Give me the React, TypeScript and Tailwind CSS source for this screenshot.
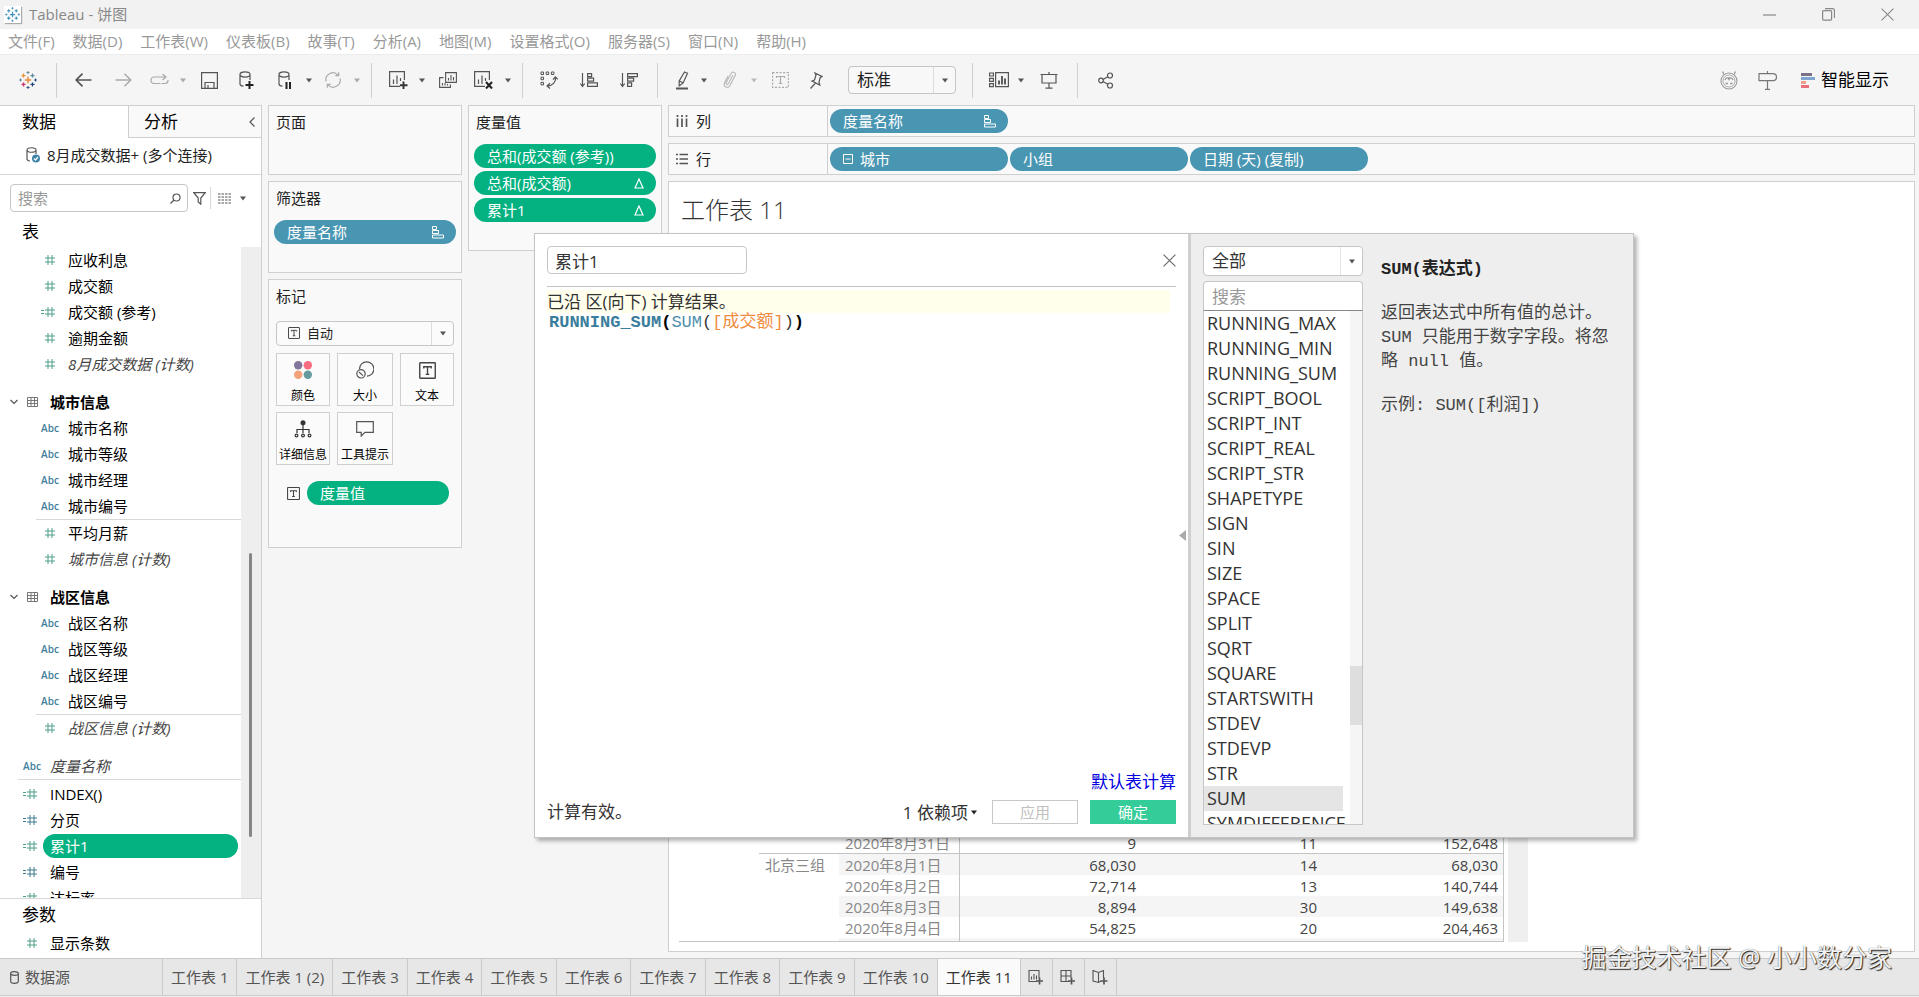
import type { ReactNode } from "react";
import clsx from "clsx";

type FieldKind = "number" | "calc" | "calcBlue" | "text";

interface Field {
  name: string;
  kind: FieldKind;
  italic?: boolean;
}

const menus = [
  "文件(F)",
  "数据(D)",
  "工作表(W)",
  "仪表板(B)",
  "故事(T)",
  "分析(A)",
  "地图(M)",
  "设置格式(O)",
  "服务器(S)",
  "窗口(N)",
  "帮助(H)",
];

const factFields: Field[] = [
  { name: "应收利息", kind: "number" },
  { name: "成交额", kind: "number" },
  { name: "成交额 (参考)", kind: "calc" },
  { name: "逾期金额", kind: "number" },
  { name: "8月成交数据 (计数)", kind: "number", italic: true },
];

const cityDimensions: Field[] = [
  { name: "城市名称", kind: "text" },
  { name: "城市等级", kind: "text" },
  { name: "城市经理", kind: "text" },
  { name: "城市编号", kind: "text" },
];

const cityMeasures: Field[] = [
  { name: "平均月薪", kind: "number" },
  { name: "城市信息 (计数)", kind: "number", italic: true },
];

const zoneDimensions: Field[] = [
  { name: "战区名称", kind: "text" },
  { name: "战区等级", kind: "text" },
  { name: "战区经理", kind: "text" },
  { name: "战区编号", kind: "text" },
];

const zoneMeasures: Field[] = [
  { name: "战区信息 (计数)", kind: "number", italic: true },
];

const looseFields: Field[] = [
  { name: "INDEX()", kind: "calc" },
  { name: "分页", kind: "calcBlue" },
  { name: "累计1", kind: "calc" },
  { name: "编号", kind: "calcBlue" },
  { name: "达标率", kind: "calc" },
];

const functionNames = [
  "RUNNING_MAX",
  "RUNNING_MIN",
  "RUNNING_SUM",
  "SCRIPT_BOOL",
  "SCRIPT_INT",
  "SCRIPT_REAL",
  "SCRIPT_STR",
  "SHAPETYPE",
  "SIGN",
  "SIN",
  "SIZE",
  "SPACE",
  "SPLIT",
  "SQRT",
  "SQUARE",
  "STARTSWITH",
  "STDEV",
  "STDEVP",
  "STR",
  "SUM",
  "SYMDIFFERENCE",
];

const rows = [
  { group: "", date: "2020年8月31日", values: ["9", "11", "152,648"] },
  { group: "北京三组", date: "2020年8月1日", values: ["68,030", "14", "68,030"] },
  { group: "", date: "2020年8月2日", values: ["72,714", "13", "140,744"] },
  { group: "", date: "2020年8月3日", values: ["8,894", "30", "149,638"] },
  { group: "", date: "2020年8月4日", values: ["54,825", "20", "204,463"] },
];

const sheets = [
  "工作表 1",
  "工作表 1 (2)",
  "工作表 3",
  "工作表 4",
  "工作表 5",
  "工作表 6",
  "工作表 7",
  "工作表 8",
  "工作表 9",
  "工作表 10",
  "工作表 11",
];

function Svg({
  w = 18,
  h = 18,
  className = "text-[#555]",
  children,
}: {
  w?: number;
  h?: number;
  className?: string;
  children: ReactNode;
}) {
  return (
    <svg
      width={w}
      height={h}
      viewBox={`0 0 ${w} ${h}`}
      fill="none"
      stroke="currentColor"
      strokeWidth="1.2"
      className={clsx("shrink-0", className)}
      aria-hidden="true"
    >
      {children}
    </svg>
  );
}

function Caret({ className = "text-[#555]" }: { className?: string }) {
  return (
    <Svg w={8} h={5} className={className}>
      <path d="M1 0.5h6L4 4.5z" fill="currentColor" stroke="none" />
    </Svg>
  );
}

const logoColors = {
  color: ["#eb8a3c", "#5b879b", "#c9356a", "#1f457e", "#eb9129"],
  blue: ["#3f8fb8", "#3f8fb8", "#3f8fb8", "#3f8fb8", "#3f8fb8"],
};

function Logo({ size, tone }: { size: number; tone: "color" | "blue" }) {
  const c = logoColors[tone];
  return (
    <svg width={size} height={size} viewBox="0 0 18 18" fill="none" aria-hidden="true">
      <path d="M9 5.8v6.4M5.8 9h6.4" stroke={c[0]} strokeWidth="1.5" />
      <path d="M4.5 2.6v4M2.5 4.6h4" stroke={c[4]} strokeWidth="1.2" />
      <path d="M13.5 2.6v4M11.5 4.6h4" stroke={c[1]} strokeWidth="1.2" />
      <path d="M4.5 11.4v4M2.5 13.4h4" stroke={c[2]} strokeWidth="1.4" />
      <path d="M13.5 11.4v4M11.5 13.4h4" stroke={c[3]} strokeWidth="1.2" />
      <path d="M9 0v3M7.5 1.5h3M1.5 7.5v3M0 9h3" stroke={c[1]} strokeWidth="0.9" />
      <path d="M16.5 7.5v3M15 9h3M9 15v3M7.5 16.5h3" stroke={c[3]} strokeWidth="0.9" />
    </svg>
  );
}

function TextIcon({ size = 16 }: { size?: number }) {
  return (
    <svg width={size} height={size} viewBox="0 0 16 16" fill="none" stroke="#444" strokeWidth="1.3" className="shrink-0" aria-hidden="true">
      <rect x="0.7" y="0.7" width="14.6" height="14.6" rx="0.5" />
      <path d="M4.5 6V4.5h7V6M8 4.5v7.2M6.3 11.7h3.4" />
    </svg>
  );
}

function SortBars() {
  return (
    <Svg w={12} h={13} className="text-white">
      <path d="M0.5 0.5h4v3h-4zM0.5 4.5h6v3h-6zM0.5 9h11v3h-11z" strokeWidth="1" />
    </Svg>
  );
}

function Delta() {
  return (
    <Svg w={10} h={11} className="text-white">
      <path d="M5 1L9 10H1z" />
    </Svg>
  );
}

function CloseIcon({ size = 13, className }: { size?: number; className?: string }) {
  return (
    <svg width={size} height={size} viewBox="0 0 12 12" stroke="currentColor" className={className} aria-hidden="true">
      <path d="M0.5 0.5l11 11M11.5 0.5l-11 11" />
    </svg>
  );
}

function Tool({
  label,
  width = "w-10",
  children,
}: {
  label: string;
  width?: string;
  children: ReactNode;
}) {
  return (
    <button type="button" aria-label={label} className={clsx("flex h-8 shrink-0 items-center justify-center", width)}>
      {children}
    </button>
  );
}

function Divider({ className }: { className?: string }) {
  return <span className={clsx("h-[35px] w-px shrink-0 bg-[#d0d0d0]", className)} />;
}

function Toolbar() {
  return (
    <div className="flex h-[50px] shrink-0 items-center bg-[#f5f5f5]">
      <Tool label="开始页面" width="w-14">
        <Logo size={18} tone="color" />
      </Tool>
      <Divider className="mr-1.5" />
      <Tool label="撤销">
        <Svg w={17} h={14}>
          <path d="M16.5 7H1M7.5 0.7L1.2 7l6.3 6.3" strokeWidth="1.7" />
        </Svg>
      </Tool>
      <Tool label="重做">
        <Svg w={17} h={14} className="text-[#aaa]">
          <path d="M0.5 7H16M9.5 0.7L15.8 7l-6.3 6.3" strokeWidth="1.5" />
        </Svg>
      </Tool>
      <Tool label="重复" width="w-8">
        <Svg w={19} h={12} className="text-[#aaa]">
          <path d="M10.500 9.500H4a3 3 0 0 1-3-3v-.5a3 3 0 0 1 3-3h12M12.500 0l3.500 3-3.500 3M11.500 9.500H15a3 3 0 0 0 3-3V6" />
        </Svg>
      </Tool>
      <Tool label="重复选项" width="w-4">
        <Caret className="text-[#aaa]" />
      </Tool>
      <Tool label="保存" width="w-9">
        <Svg w={17} h={17}>
          <path d="M0.6 0.6h15.8v15.8H0.6zM4 16v-5.5h9V16M7 16v-3" />
        </Svg>
      </Tool>
      <Tool label="新建数据源">
        <Svg w={16} h={19}>
          <path d="M1 3.5c0-3.4 10-3.4 10 0s-10 3.4-10 0zM1 3.5V13c0 1.3 1.5 2 3.5 2.2M11 3.5V9" />
          <path d="M10.5 10v8M6.5 14h8" stroke="#222" strokeWidth="2" />
        </Svg>
      </Tool>
      <Tool label="暂停自动更新" width="w-9">
        <Svg w={14} h={19}>
          <path d="M1 3.5c0-3.4 10-3.4 10 0s-10 3.4-10 0zM1 3.5V13c0 1.3 1.5 2 3.5 2.2M11 3.5V9" />
          <path d="M8.5 11v7M12 11v7" stroke="#222" strokeWidth="2" />
        </Svg>
      </Tool>
      <Tool label="更新选项" width="w-3">
        <Caret />
      </Tool>
      <Tool label="运行更新" width="w-9">
        <Svg w={18} h={16} className="text-[#aaa]">
          <path d="M2 9.5A7 7 0 0 1 14 3.2M16 6.5A7 7 0 0 1 4 12.8M14.7 0.3v3.4h-3.4M3.3 15.7v-3.4h3.4" />
        </Svg>
      </Tool>
      <Tool label="运行选项" width="w-3">
        <Caret className="text-[#aaa]" />
      </Tool>
      <Divider className="mr-2.5 ml-2" />
      <Tool label="新建工作表" width="w-8">
        <Svg w={19} h={18}>
          <path d="M11 15.4H0.6V0.6h14.8V9M4.5 13V8.5M8 13V4.5M11.5 10V7" />
          <path d="M14.5 10.5v7.5M11 14.2h7.5" stroke="#333" strokeWidth="1.9" />
        </Svg>
      </Tool>
      <Tool label="新建选项" width="w-4">
        <Caret />
      </Tool>
      <Tool label="复制工作表" width="w-9">
        <Svg w={18} h={16}>
          <path d="M6.6 0.6h10.8v9.8H6.6zM9.5 8.5V6M12 8.5V3M14.5 8.5V5M4.5 5.6H0.6v9.8h10.8v-3M3.5 13.5V11M6 13.5V11M8.5 13.5V12" strokeWidth="1.1" />
        </Svg>
      </Tool>
      <Tool label="清除工作表" width="w-9">
        <Svg w={20} h={18}>
          <path d="M11 15.4H0.6V0.6h14.8V9M4.5 13V8.5M8 13V4.5M11.5 10V7" />
          <path d="M12 11l6 6.5M18 11l-6 6.5" stroke="#222" strokeWidth="2.1" />
        </Svg>
      </Tool>
      <Tool label="清除选项" width="w-3">
        <Caret />
      </Tool>
      <Divider className="mr-1.5 ml-2" />
      <Tool label="交换行和列">
        <Svg w={18} h={18}>
          <path d="M1 1h2.5v2.5H1zM6.2 1h2.5v2.5H6.2zM11.4 1h2.5v2.5h-2.5zM1 6.2h2.5v2.5H1zM1 11.4h2.5v2.5H1z" strokeWidth="1" />
          <path d="M15.5 6.5c.5 4-2.5 8-8 8.5M13 8.7l2.3-2.8 2.4 2.5M10 12.2L7 15l3 2.5" />
        </Svg>
      </Tool>
      <Tool label="升序排序">
        <Svg w={18} h={16}>
          <path d="M2.5 1v13M0.3 11.5l2.2 3 2.2-3M7.6 1.6h4v3h-4zM7.6 6.2h6v3h-6zM7.6 10.8h9.8v3.6H7.6z" />
        </Svg>
      </Tool>
      <Tool label="降序排序">
        <Svg w={18} h={16}>
          <path d="M2.5 1v13M0.3 11.5l2.2 3 2.2-3M7.6 1.6h9.8v3H7.6zM7.6 6.2h6v3h-6zM7.6 10.8h4v3.6h-4z" />
        </Svg>
      </Tool>
      <Divider className="mr-2.5 ml-2" />
      <Tool label="突出显示" width="w-7">
        <Svg w={15} h={19}>
          <path d="M9.5 1l3 1.2-4.5 10-3.8 2.6V10zM4.3 10l3.6 1.8" />
          <path d="M1 17.5h12" strokeWidth="2" />
        </Svg>
      </Tool>
      <Tool label="突出显示选项" width="w-4">
        <Caret />
      </Tool>
      <Tool label="组成员" width="w-9">
        <Svg w={14} h={18} className="text-[#bbb]">
          <path d="M10 4L5.5 12.5c-.8 1.5-3 .6-2.3-1L8 2.5C9.5 0 13.5 1.5 12.2 4.5L7 14.5c-2 3.5-7 1.5-5.5-2.5L5 5" />
        </Svg>
      </Tool>
      <Tool label="组成员选项" width="w-3">
        <Caret className="text-[#bbb]" />
      </Tool>
      <Tool label="显示标记标签">
        <Svg w={17} h={16} className="text-[#aaa]">
          <path d="M0.6 0.6h15.8v14.8H0.6z" strokeDasharray="2 1.5" />
          <path d="M4.5 6V4.5h8V6M8.5 4.5v7M6.8 11.5h3.4" />
        </Svg>
      </Tool>
      <Tool label="固定轴" width="w-8">
        <Svg w={14} h={17}>
          <path d="M6 1l7 3.5-1.8 1L10 10l.8 3L3 9l2.5-1L7 3zM6.500 11L1.500 16.500" />
        </Svg>
      </Tool>
      <div className="relative ml-4 flex shrink-0">
        <select
          aria-label="适合"
          className="h-[28px] w-[108px] appearance-none rounded-sm border border-[#c6c6c6] bg-[#f8f8f8] pl-2 text-[17px] leading-6 text-[#222]"
        >
          <option>标准</option>
        </select>
        <span className="pointer-events-none absolute inset-y-px right-px flex w-[22px] items-center justify-center border-l border-[#dcdcdc]">
          <Caret />
        </span>
      </div>
      <Divider className="mr-3 ml-4" />
      <Tool label="显示/隐藏卡" width="w-7">
        <Svg w={20} h={16}>
          <path d="M0.6 1h3.8v3H0.6zM0.6 6.3h3.8v3H0.6zM0.6 11.6h3.8v3H0.6zM6.6 0.6h12.800v14H6.600z" />
          <path d="M10 12.5V8.5M13 12.5V4M16 12.5V6.5" strokeWidth="1.9" />
        </Svg>
      </Tool>
      <Tool label="卡选项" width="w-4">
        <Caret />
      </Tool>
      <Tool label="演示模式">
        <Svg w={18} h={17}>
          <path d="M0.5 2.5h17M2 2.5v8.5h14V2.5M9 0v2.5M9 11v5M5.5 16.2h7" />
        </Svg>
      </Tool>
      <Divider className="mr-2 ml-2" />
      <Tool label="共享">
        <Svg w={16} h={17}>
          <circle cx="3" cy="8.5" r="2.3" />
          <circle cx="12" cy="3.5" r="2.5" />
          <circle cx="12" cy="13.5" r="2.5" />
          <path d="M5 7.5l4.800-2.800M5 9.500l4.800 2.800" />
        </Svg>
      </Tool>
      <div className="ml-auto flex items-center pr-[30px]">
        <Tool label="数据指南">
          <Svg w={20} h={20} className="text-[#999]">
            <circle cx="10" cy="11" r="8" strokeWidth="1.1" />
            <circle cx="10" cy="11" r="6" strokeWidth="0.8" />
            <path d="M5 4.5L3.5 1.5M15 4.5l1.5-3M6 10c1-2.5 3-3 4-.5 1-2.5 3-2 4 .5M6.5 13.5h2.5M11 13.5h2.5M10 7v3" strokeWidth="1.3" />
          </Svg>
        </Tool>
        <Tool label="帮助" width="w-9">
          <Svg w={19} h={19} className="text-[#777]">
            <path d="M1 2.6h14a3 3 0 0 1 0 7H1zM9.5 0v2.5M9.5 10v8M7 18.3h5" />
          </Svg>
        </Tool>
        <button type="button" className="ml-4 flex items-center gap-1.5 text-[17px] leading-6 text-black">
          <svg width="14" height="15" viewBox="0 0 14 15" aria-hidden="true">
            <path d="M0 0h11v3H0z" fill="#7b7189" />
            <path d="M0 4h14v3H0z" fill="#7fa6d0" />
            <path d="M0 8h5v3H0z" fill="#eda188" />
            <path d="M0 12h8v3H0z" fill="#ea6f7c" />
          </svg>
          智能显示
        </button>
      </div>
    </div>
  );
}

function FieldIcon({ kind }: { kind: FieldKind }) {
  if (kind === "text") {
    return <span className="text-[10px] leading-4 font-semibold text-[#42809b]">Abc</span>;
  }
  return (
    <Svg w={18} h={10} className={kind === "calcBlue" ? "text-[#3d7b91]" : "text-[#4f9e8a]"}>
      <path d="M7 0v10M11 0v10M4 3h10M4 7h10" strokeWidth="1" />
      {kind !== "number" && <path d="M0 3.5h3M0 6.5h3" strokeWidth="1" />}
    </Svg>
  );
}

function FieldRow({ field, nested = false, selected = false }: { field: Field; nested?: boolean; selected?: boolean }) {
  return (
    <li className={clsx("flex h-[26px] shrink-0 items-center pr-[3px]", nested ? "pl-[39px]" : "pl-[21px]")}>
      <span className="flex w-[22px] shrink-0 justify-center">
        <FieldIcon kind={field.kind} />
      </span>
      <span
        className={clsx(
          "flex-1 truncate pl-[7px] text-[15px] leading-6",
          field.italic ? "text-[#444] italic" : "text-black",
          selected && "rounded-full bg-[#04b180] text-white!",
        )}
      >
        {field.name}
      </span>
    </li>
  );
}

function FieldGroup({ title, dimensions, measures }: { title: string; dimensions: Field[]; measures: Field[] }) {
  return (
    <section className="mt-3">
      <h3 className="flex h-[26px] items-center text-[15px] font-bold text-black">
        <span className="flex w-[27px] justify-center">
          <Svg w={8} h={6}>
            <path d="M0.5 1L4 4.5 7.5 1" />
          </Svg>
        </span>
        <Svg w={11} h={10} className="mr-3 text-[#777]">
          <path d="M0.5 0.5h10v9h-10zM0.5 3.5h10M0.5 6.5h10M4 0.5v9M7.5 0.5v9" strokeWidth="1" />
        </Svg>
        {title}
      </h3>
      <ul>
        {dimensions.map((f) => (
          <FieldRow key={f.name} field={f} nested />
        ))}
      </ul>
      <div className="ml-9 h-px bg-[#d8d8d8]" />
      <ul>
        {measures.map((f) => (
          <FieldRow key={f.name} field={f} nested />
        ))}
      </ul>
    </section>
  );
}

function DataPane() {
  return (
    <aside className="flex w-[262px] shrink-0 flex-col border-t border-r border-[#cfcfcf] bg-white">
      <div className="flex h-8 shrink-0 text-[17px] text-black">
        <button type="button" className="w-[128px] pl-[22px] text-left">
          数据
        </button>
        <button type="button" className="flex-1 border-b border-l border-[#cfcfcf] bg-[#f9f9f9] pl-[15px] text-left">
          分析
        </button>
        <button type="button" aria-label="折叠" className="flex w-5 items-center border-b border-[#cfcfcf] bg-[#f9f9f9] pl-2">
          <Svg w={6} h={10}>
            <path d="M5.5 0.5L1 5l4.5 4.5" />
          </Svg>
        </button>
      </div>
      <div className="flex h-[37px] shrink-0 items-center gap-1.5 border-b border-[#d8d8d8] pb-0.5 pl-[26px] text-[15px] text-[#222]">
        <Svg w={15} h={16}>
          <path d="M1 3c0-3 9-3 9 0s-9 3-9 0zM1 3v9c0 1.200 1 1.800 3 2M10 3v4" />
          <circle cx="10" cy="11.5" r="4" fill="#3f84a8" stroke="none" />
          <path d="M8 11.5l1.500 1.500 2.500-3" stroke="#fff" />
        </Svg>
        8月成交数据+ (多个连接)
      </div>
      <div className="flex shrink-0 items-center pt-[9px] pl-2.5">
        <div className="flex h-7 w-[178px] items-center rounded-sm border border-[#c6c6c6] pr-1.5 pl-[7px]">
          <input aria-label="搜索字段" placeholder="搜索" className="min-w-0 flex-1 text-[15px] outline-none placeholder:text-[#999]" />
          <Svg w={11} h={11}>
            <circle cx="6.5" cy="4.5" r="3.5" />
            <path d="M4 7L0.5 10.5" />
          </Svg>
        </div>
        <button type="button" aria-label="筛选字段" className="flex w-[22px] justify-center">
          <Svg w={13} h={13}>
            <path d="M0.8 0.7h11.4L7.800 6v6.200L5.200 10V6z" />
          </Svg>
        </button>
        <span className="h-[22px] w-px bg-[#d8d8d8]" />
        <button type="button" aria-label="视图选项" className="flex items-center gap-2 pl-[7px]">
          <Svg w={13} h={11}>
            <path d="M0 1h13M0 4h13M0 7h13M0 10h13" strokeDasharray="2.500 1" />
          </Svg>
          <Caret />
        </button>
      </div>
      <h2 className="shrink-0 pt-2 pb-[3px] pl-[22px] text-[17px] leading-6 text-black">表</h2>
      <div className="flex min-h-0 flex-1 justify-between overflow-hidden">
        <div className="min-w-0 flex-1">
          <ul>
            {factFields.map((f) => (
              <FieldRow key={f.name} field={f} nested />
            ))}
          </ul>
          <FieldGroup title="城市信息" dimensions={cityDimensions} measures={cityMeasures} />
          <FieldGroup title="战区信息" dimensions={zoneDimensions} measures={zoneMeasures} />
          <ul className="mt-3">
            <FieldRow field={{ name: "度量名称", kind: "text", italic: true }} />
          </ul>
          <div className="ml-[18px] h-px bg-[#d8d8d8]" />
          <ul className="pt-px">
            {looseFields.map((f) => (
              <FieldRow key={f.name} field={f} selected={f.name === "累计1"} />
            ))}
          </ul>
        </div>
        <div className="flex w-5 shrink-0 justify-center bg-[#eee] pt-[306px] pr-0.5">
          <div className="h-[284px] w-[3px] rounded-full bg-[#858585]" />
        </div>
      </div>
      <div className="shrink-0 border-t border-[#d8d8d8] pb-[2px]">
        <h2 className="pt-1 pb-[3px] pl-[22px] text-[17px] leading-6 text-black">参数</h2>
        <ul>
          <FieldRow field={{ name: "显示条数", kind: "number" }} />
        </ul>
      </div>
    </aside>
  );
}

function Pill({ tone, className, children }: { tone: "green" | "blue"; className?: string; children: ReactNode }) {
  return (
    <button
      type="button"
      className={clsx(
        "flex h-6 items-center justify-between rounded-full pr-3 pl-[13px] text-[15px] leading-6 text-white",
        tone === "green" ? "bg-[#04b180]" : "bg-[#4996b2]",
        className,
      )}
    >
      {children}
    </button>
  );
}

function Card({ title, className, children }: { title: string; className?: string; children?: ReactNode }) {
  return (
    <section className={clsx("border border-[#cfcfcf] bg-[#f9f9f9] px-[5px]", className)}>
      <h2 className="pt-1 pl-0.5 text-[15px] leading-6 text-[#222]">{title}</h2>
      {children}
    </section>
  );
}

function MarkButton({ label, className, children }: { label: string; className?: string; children: ReactNode }) {
  return (
    <button
      type="button"
      className={clsx(
        "flex h-[53px] flex-col items-center justify-between border border-[#cfcfcf] bg-[#fbfbfb] pt-1.5 text-[12px] leading-[18px] whitespace-nowrap text-black",
        className,
      )}
    >
      <span className="flex h-5 items-center">{children}</span>
      {label}
    </button>
  );
}

function MarksCard() {
  return (
    <Card title="标记" className="h-[269px]">
      <div className="mx-0.5">
        <div className="relative mt-[13px]">
          <span className="pointer-events-none absolute top-1.5 left-3">
            <TextIcon size={12} />
          </span>
          <select
            aria-label="标记类型"
            className="block h-[25px] w-full appearance-none rounded-sm border border-[#c6c6c6] bg-[#fbfbfb] pl-[30px] text-[13px] text-[#222]"
          >
            <option>自动</option>
          </select>
          <span className="pointer-events-none absolute inset-y-px right-px flex w-[22px] items-center justify-center border-l border-[#dcdcdc]">
            <Caret />
          </span>
        </div>
        <div className="mt-[7px] grid grid-cols-[54px_56px_54px] gap-x-[7px] gap-y-1.5">
          <MarkButton label="颜色">
            <svg width="18" height="18" viewBox="0 0 18 18" aria-hidden="true">
              <circle cx="4.2" cy="4.2" r="4.2" fill="#83759b" />
              <circle cx="13.8" cy="4.2" r="4.2" fill="#f96c82" />
              <circle cx="4.2" cy="13.8" r="4.2" fill="#f3a27a" />
              <circle cx="13.8" cy="13.8" r="4.2" fill="#659b9e" />
            </svg>
          </MarkButton>
          <MarkButton label="大小">
            <Svg w={18} h={18}>
              <path d="M3.5 8A7.2 7.2 0 1 1 11 15.2" />
              <circle cx="5" cy="12.8" r="4.2" />
              <path d="M3 11l4 3.6" />
            </Svg>
          </MarkButton>
          <MarkButton label="文本">
            <TextIcon size={17} />
          </MarkButton>
          <MarkButton label="详细信息">
            <Svg w={18} h={18} className="text-[#333]">
              <circle cx="9" cy="2.8" r="2.5" fill="currentColor" stroke="none" />
              <path d="M9 4v9M3 13V9.5h12V13" />
              <circle cx="2.5" cy="15.5" r="1.4" />
              <circle cx="9" cy="15.5" r="1.4" />
              <circle cx="15.5" cy="15.5" r="1.4" />
            </Svg>
          </MarkButton>
          <MarkButton label="工具提示">
            <Svg w={18} h={16}>
              <path d="M0.7 0.7h16.6v10.6H9L5.2 15v-3.7H0.7z" />
            </Svg>
          </MarkButton>
        </div>
        <div className="mt-4 flex items-center gap-[7px] pr-[5px] pl-[11px]">
          <TextIcon size={13} />
          <Pill tone="green" className="flex-1">
            度量值
          </Pill>
        </div>
      </div>
    </Card>
  );
}

function Shelf({ icon, title, children }: { icon: ReactNode; title: string; children: ReactNode }) {
  return (
    <div className="flex h-8 shrink-0 items-center border border-[#cfcfcf] bg-[#f9f9f9]">
      <div className="flex w-[159px] shrink-0 items-center gap-2 self-stretch border-r border-[#cfcfcf] pl-[7px] text-[15px] text-[#222]">
        {icon}
        {title}
      </div>
      <div className="flex gap-0.5 pl-0.5">{children}</div>
    </div>
  );
}

function Worksheet() {
  return (
    <section className="flex min-h-0 flex-1 flex-col justify-between border border-[#cfcfcf] bg-white pb-[9px]">
      <h1 className="pt-2.5 pl-3 text-[24px] leading-9 font-light text-[#333]">工作表 11</h1>
      <div className="flex items-stretch pl-2.5">
        <table className="border-separate border-spacing-0 border-r border-b border-[#c4c4c4] text-[15px] leading-5 text-[#444]">
          <tbody>
            {rows.map((row, i) => (
              <tr key={row.date} className="h-[21px]">
                <td className="w-20 p-0" />
                <td className={clsx("w-20 p-0 pl-[6px] text-[#888]", i === 0 && "border-b border-[#c4c4c4]")}>{row.group}</td>
                <td
                  className={clsx(
                    "w-[121px] border-r border-[#c4c4c4] p-0 pl-[6px] text-[#888]",
                    i === 0 && "border-b",
                    i % 2 === 1 && "bg-[#f5f5f5]",
                  )}
                >
                  {row.date}
                </td>
                {row.values.map((value, j) => (
                  <td
                    key={j}
                    className={clsx(
                      "w-[181px] p-0 pr-[5px] text-right",
                      i === 0 && "border-b border-[#c4c4c4]",
                      i % 2 === 1 && "bg-[#f5f5f5]",
                    )}
                  >
                    {value}
                  </td>
                ))}
              </tr>
            ))}
            <tr className="h-[3px]">
              <td colSpan={2} className="p-0" />
              <td className="border-r border-[#c4c4c4] bg-[#f5f5f5] p-0" />
              <td colSpan={3} className="bg-[#f5f5f5] p-0" />
            </tr>
          </tbody>
        </table>
        <div className="ml-1 w-5 bg-[#efefef]" />
      </div>
    </section>
  );
}

function CalculationDialog() {
  return (
    <div
      role="dialog"
      aria-label="计算编辑器"
      className="absolute top-[233px] left-[534px] flex h-[605px] w-[1100px] border border-[#c4c4c4] bg-white text-[17px] text-[#333] shadow-[3px_3px_4px_rgba(0,0,0,0.3)]"
    >
      <div className="relative flex flex-1 flex-col p-3">
        <div className="flex items-center justify-between">
          <input
            aria-label="计算名称"
            defaultValue="累计1"
            className="h-[28px] w-[200px] rounded-sm border border-[#c6c6c6] px-[7px] leading-6 outline-none"
          />
          <button type="button" aria-label="关闭" className="text-[#666]">
            <CloseIcon />
          </button>
        </div>
        <div className="mt-3 flex-1 border-t border-[#c4c4c4] pt-[3px]">
          <p className="mr-1.5 bg-[#ffffec] leading-[23px]">已沿 区(向下) 计算结果。</p>
          <code className="block pl-0.5 font-['Liberation_Mono','Noto_Sans_CJK_SC',monospace] text-[17px] leading-5">
            <b className="text-[#3b7d9c]">RUNNING_SUM</b>
            <b className="text-black">(</b>
            <span className="text-[#4f91ad]">SUM</span>(<span className="text-[#ef8c3c]">[成交额]</span>)
            <b className="text-black">)</b>
          </code>
        </div>
        <a href="#table-calc" className="self-end leading-6 text-[#0000e0]">
          默认表计算
        </a>
        <div className="mt-1.5 flex items-center">
          <span className="flex-1 leading-6">计算有效。</span>
          <button type="button" className="mr-3.5 flex items-center gap-0.5">
            1 依赖项
            <Caret className="text-[#222]" />
          </button>
          <button type="button" disabled className="mr-3 h-6 w-[86px] border border-[#c8c8c8] text-[15px] leading-5 text-[#c0c0c0]">
            应用
          </button>
          <button type="button" className="h-6 w-[86px] bg-[#34cc98] text-[15px] leading-6 text-white">
            确定
          </button>
        </div>
        <button type="button" aria-label="折叠函数列表" className="absolute top-[296px] right-0.5">
          <svg width="7" height="11" viewBox="0 0 7 11" aria-hidden="true">
            <path d="M7 0v11L0 5.500z" fill="#aaa" />
          </svg>
        </button>
      </div>
      <div className="flex w-[445px] shrink-0 border-l-[3px] border-[#cfcfcf] bg-[#eee] pt-3 pb-3 pl-3">
        <div className="flex w-[160px] shrink-0 flex-col">
          <div className="relative">
            <select
              aria-label="函数类别"
              className="block h-[30px] w-full appearance-none rounded-sm border border-[#c6c6c6] bg-white pl-2"
            >
              <option>全部</option>
            </select>
            <span className="pointer-events-none absolute inset-y-px right-px flex w-[22px] items-center justify-center border-l border-[#e4e4e4]">
              <Caret />
            </span>
          </div>
          <input
            aria-label="搜索函数"
            placeholder="搜索"
            className="mt-[5px] h-[30px] rounded-t-sm border border-[#c6c6c6] border-b-[#888] bg-white px-2 outline-none placeholder:text-[#999]"
          />
          <div className="flex min-h-0 flex-1 overflow-hidden border border-t-0 border-[#c6c6c6] bg-white">
            <ul className="min-w-0 flex-1 overflow-hidden text-[18px]">
              {functionNames.map((name) => (
                <li key={name} className={clsx("mr-[7px] pl-[3px] leading-[25px]", name === "SUM" && "bg-[#e5e5e5]")}>
                  {name}
                </li>
              ))}
            </ul>
            <div className="w-3 shrink-0 bg-[#f5f5f5] pt-[355px]">
              <div className="h-[59px] bg-[#dedede]" />
            </div>
          </div>
        </div>
        <div className="w-[250px] pt-3 pl-[18px] font-['Liberation_Mono','Noto_Sans_CJK_SC',monospace] leading-6 text-[#444]">
          <h2 className="font-bold text-[#222]">SUM(表达式)</h2>
          <p className="mt-5">返回表达式中所有值的总计。SUM 只能用于数字字段。将忽略 null 值。</p>
          <p className="mt-5">示例: SUM([利润])</p>
        </div>
      </div>
    </div>
  );
}

function SheetTabs() {
  return (
    <nav className="flex h-[38px] shrink-0 border-y border-[#cacaca] bg-[#e7e7e7] text-[15px] text-[#555]">
      <button type="button" className="flex w-[163px] items-center gap-1.5 border-r border-[#cacaca] pl-2.5">
        <Svg w={9} h={13}>
          <path d="M0.7 2.5c0-2.4 7.6-2.4 7.6 0s-7.6 2.4-7.6 0zM0.7 2.5v8c0 2.4 7.6 2.4 7.6 0v-8" />
        </Svg>
        数据源
      </button>
      {sheets.map((sheet) => (
        <button
          key={sheet}
          type="button"
          className={clsx(
            "border-r border-[#cacaca] px-2 whitespace-nowrap",
            sheet === "工作表 11" && "bg-[#fafafa] text-[#333]",
          )}
        >
          {sheet}
        </button>
      ))}
      <button type="button" aria-label="新建工作表" className="flex w-8 items-center justify-center border-r border-[#cacaca]">
        <Svg w={16} h={15}>
          <path d="M9 11.5H1v-11h10V8M3.5 9.5V6.5M6 9.5V4M8.5 9.5V5.5" strokeWidth="1.1" />
          <path d="M11.5 7.5v7M8 11h7" strokeWidth="1.7" />
        </Svg>
      </button>
      <button type="button" aria-label="新建仪表板" className="flex w-8 items-center justify-center border-r border-[#cacaca]">
        <Svg w={16} h={15}>
          <path d="M9 11.5H1v-11h10V8M6 0.5v11M1 6h10" strokeWidth="1.1" />
          <path d="M11.5 7.5v7M8 11h7" strokeWidth="1.7" />
        </Svg>
      </button>
      <button type="button" aria-label="新建故事" className="flex w-8 items-center justify-center border-r border-[#cacaca]">
        <Svg w={16} h={15}>
          <path d="M9 11L6.5 12.5 1 11V0.5L6.5 2.500 11.500 0.500V8M6.500 2.500v10" strokeWidth="1.1" />
          <path d="M12 7.5v7M8.5 11h7" strokeWidth="1.7" />
        </Svg>
      </button>
    </nav>
  );
}

export default function App() {
  return (
    <div className="relative flex h-screen flex-col overflow-hidden bg-[#f5f5f5] font-['Open_Sans','Noto_Sans_CJK_SC',sans-serif]">
      <header className="flex h-[29px] shrink-0 items-center justify-between bg-[#f2f2f2] pr-[25px] pl-1 text-[#888]">
        <div className="flex items-center gap-2 text-[15px]">
          <span className="flex bg-white p-px shadow-[1px_1px_1px_#aaa]">
            <Logo size={15} tone="blue" />
          </span>
          Tableau - 饼图
        </div>
        <div className="flex items-center gap-[46px]">
          <button type="button" aria-label="最小化" className="flex h-4 items-center">
            <Svg w={13} h={2} className="text-[#888]">
              <path d="M0 1h13" />
            </Svg>
          </button>
          <button type="button" aria-label="还原">
            <Svg w={13} h={13} className="text-[#888]">
              <rect x="0.6" y="2.6" width="9" height="9.5" rx="1" />
              <path d="M3 0.7h7.5a2 2 0 0 1 2 2V10" />
            </Svg>
          </button>
          <button type="button" aria-label="关闭窗口">
            <CloseIcon />
          </button>
        </div>
      </header>
      <nav className="flex h-[26px] shrink-0 items-center gap-[18px] border-b border-[#ececec] bg-white pl-2 text-[15px] text-[#999]">
        {menus.map((menu) => (
          <button key={menu} type="button" className="whitespace-nowrap">
            {menu}
          </button>
        ))}
      </nav>
      <Toolbar />
      <main className="flex min-h-0 flex-1">
        <DataPane />
        <div className="flex w-[200px] shrink-0 flex-col gap-1.5 pl-1.5">
          <Card title="页面" className="h-[70px]" />
          <Card title="筛选器" className="h-[92px]">
            <Pill tone="blue" className="mt-2.5 w-full">
              度量名称
              <SortBars />
            </Pill>
          </Card>
          <MarksCard />
        </div>
        <div className="w-[200px] shrink-0 pl-1.5">
          <Card title="度量值" className="h-[146px]">
            <div className="mt-2.5 flex flex-col gap-[3px]">
              <Pill tone="green">总和(成交额 (参考))</Pill>
              <Pill tone="green">
                总和(成交额)
                <Delta />
              </Pill>
              <Pill tone="green">
                累计1
                <Delta />
              </Pill>
            </div>
          </Card>
        </div>
        <div className="flex min-w-0 flex-1 flex-col gap-1.5 pr-1 pb-1.5 pl-1.5">
          <Shelf
            title="列"
            icon={
              <Svg w={12} h={12}>
                <path d="M1.5 0v2M1.5 3.5V12M6 0v2M6 3.5V12M10.5 0v2M10.5 3.5V12" strokeWidth="1.7" />
              </Svg>
            }
          >
            <Pill tone="blue" className="w-[178px]">
              度量名称
              <SortBars />
            </Pill>
          </Shelf>
          <Shelf
            title="行"
            icon={
              <Svg w={12} h={12}>
                <path d="M0 1.5h2M3.5 1.5H12M0 6h2M3.5 6H12M0 10.5h2M3.5 10.5H12" strokeWidth="1.7" />
              </Svg>
            }
          >
            <Pill tone="blue" className="w-[178px]">
              <span className="flex items-center gap-[7px]">
                <Svg w={10} h={10} className="text-white">
                  <path d="M0.5 0.5h9v9h-9zM2.5 5h5" strokeWidth="1" />
                </Svg>
                城市
              </span>
            </Pill>
            <Pill tone="blue" className="w-[178px]">
              小组
            </Pill>
            <Pill tone="blue" className="w-[178px]">
              日期 (天) (复制)
            </Pill>
          </Shelf>
          <Worksheet />
        </div>
      </main>
      <SheetTabs />
      <div className="h-px shrink-0 bg-[#f0f0f0]" />
      <CalculationDialog />
      <p className="absolute right-[27px] bottom-[22px] text-[25px] leading-9 text-[#f4f4f4] [text-shadow:1px_1px_1px_#222,0_0_1px_#555]">
        掘金技术社区 @ 小小数分家
      </p>
    </div>
  );
}
